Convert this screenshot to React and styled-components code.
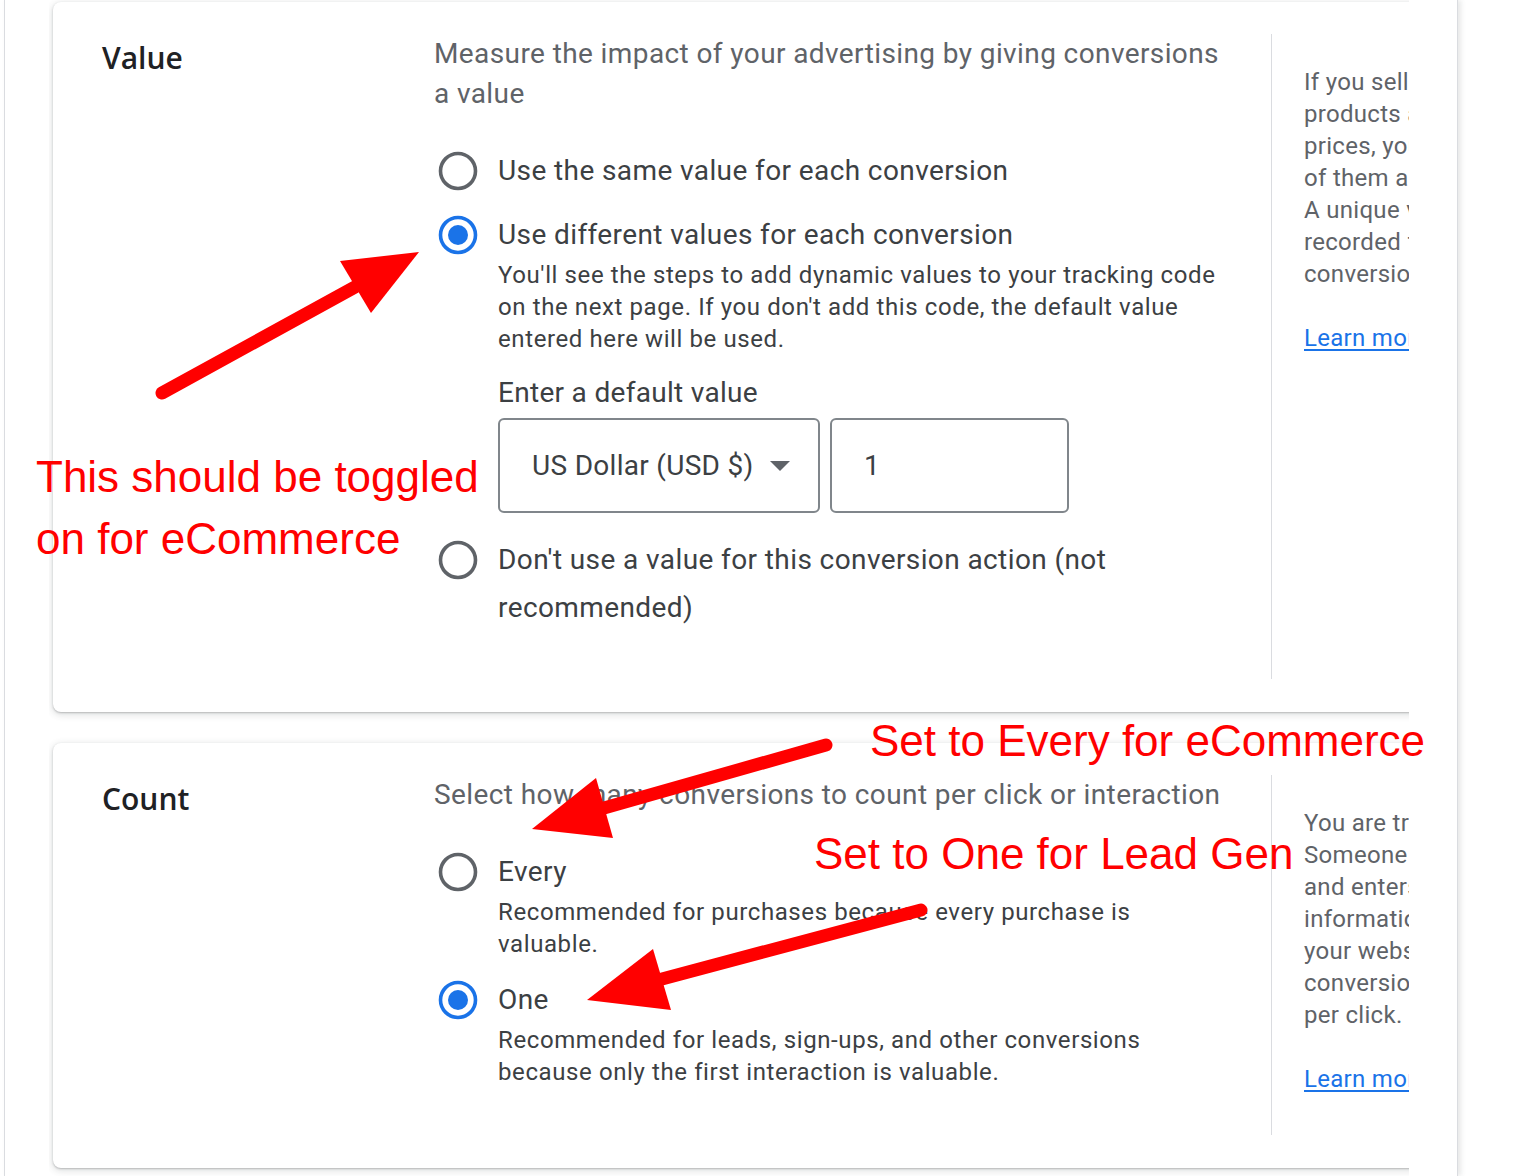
import React from 'react';
import styled, { createGlobalStyle } from 'styled-components';

const GlobalStyle = createGlobalStyle`
  html, body {
    margin: 0;
    padding: 0;
    background: #fff;
  }
  body {
    font-family: Roboto, "Liberation Sans", Arial, sans-serif;
    overflow: hidden;
  }
`;

const Page = styled.div`
  position: relative;
  width: 1534px;
  height: 1176px;
  overflow: hidden;
`;

const Frame = styled.div`
  margin-left: 4px;
  width: 1454px;
  height: 100%;
  box-sizing: border-box;
  border-left: 1px solid #dadce0;
  border-right: 1px solid #dadce0;
  box-shadow: 3px 0 5px rgba(60, 64, 67, 0.12);
  padding-left: 44px;
`;

const Clip = styled.div`
  width: 1360px;
  height: 100%;
  box-sizing: border-box;
  overflow: hidden;
  padding: 2px 0 0 4px;
  display: flex;
  flex-direction: column;
  gap: 31px;
`;

const Card = styled.section`
  flex: none;
  width: 1500px;
  box-sizing: border-box;
  display: flex;
  align-items: stretch;
  background: #fff;
  border-radius: 8px;
  box-shadow: 0 1px 2px rgba(60, 64, 67, 0.3), 0 2px 6px 2px rgba(60, 64, 67, 0.12);
  padding: 32px 0 33px 49px;
`;

const Title = styled.h2`
  flex: none;
  width: 332px;
  margin: 0;
  padding-top: 4px;
  font-family: "Open Sans", Roboto, sans-serif;
  font-weight: 600;
  font-size: 30px;
  line-height: 40px;
  color: #202124;
`;

const Main = styled.div`
  flex: none;
  width: 790px;
  padding-bottom: 47px;
`;

const Description = styled.p`
  margin: 0;
  font-size: 28px;
  line-height: 40px;
  letter-spacing: 0.4px;
  color: #5f6368;
`;

const Options = styled.div`
  margin-top: 33px;
  display: flex;
  flex-direction: column;
  gap: 16px;
`;

const Option = styled.div`
  display: grid;
  grid-template-columns: 48px 1fr;
  column-gap: 16px;
`;

const RadioBox = styled.div`
  height: 48px;
  display: flex;
  align-items: center;
  justify-content: center;
`;

const Label = styled.div`
  font-size: 28px;
  line-height: 48px;
  letter-spacing: 0.4px;
  color: #3c4043;
`;

const Helper = styled.div`
  font-size: 24px;
  line-height: 32px;
  letter-spacing: 0.6px;
  color: #3c4043;
`;

const FieldLabel = styled.div`
  margin-top: 22px;
  font-size: 28px;
  line-height: 32px;
  letter-spacing: 0.3px;
  color: #3c4043;
`;

const FieldRow = styled.div`
  margin: 9px 0 7px;
  display: flex;
  gap: 10px;
`;

const Field = styled.div`
  width: ${(p) => p.$width}px;
  height: 95px;
  box-sizing: border-box;
  border: 2px solid #80868b;
  border-radius: 6px;
  padding-left: ${(p) => p.$pad}px;
  display: flex;
  align-items: center;
  gap: 16px;
  font-size: 28px;
  letter-spacing: 0.3px;
  color: #3c4043;
`;

const Side = styled.aside`
  flex: none;
  width: 340px;
  margin-left: 47px;
  border-left: 1px solid #dadce0;
  padding: 32px 0 0 32px;
  font-size: 24px;
  line-height: 32px;
  letter-spacing: 0.3px;
  color: #5f6368;
  white-space: pre-line;
`;

const SideLink = styled.a`
  display: block;
  margin-top: 32px;
  color: #1a73e8;
  text-decoration: underline;
  text-underline-offset: 3px;
`;

const Overlay = styled.div`
  position: absolute;
  inset: 0;
  pointer-events: none;
`;

const Note = styled.div`
  position: absolute;
  left: ${(p) => p.$x}px;
  top: ${(p) => p.$y}px;
  font-family: "Liberation Sans", Arial, sans-serif;
  font-size: 44px;
  line-height: 62px;
  color: #ff0000;
  white-space: nowrap;
`;

const ArrowLayer = styled.svg`
  position: absolute;
  left: 0;
  top: 0;
`;

const Radio = ({ checked }) => (
  <svg width="40" height="40" viewBox="0 0 40 40">
    <circle
      cx="20"
      cy="20"
      r="17.5"
      fill="none"
      stroke={checked ? '#1a73e8' : '#5f6368'}
      strokeWidth="3.6"
    />
    {checked && <circle cx="20" cy="20" r="10" fill="#1a73e8" />}
  </svg>
);

const Caret = () => (
  <svg width="20" height="10" viewBox="0 0 20 10">
    <polygon points="0,0 20,0 10,10" fill="#5f6368" />
  </svg>
);

const Choice = ({ checked, label, children }) => (
  <Option>
    <RadioBox>
      <Radio checked={checked} />
    </RadioBox>
    <div>
      <Label>{label}</Label>
      {children}
    </div>
  </Option>
);

const arrows = [
  { tail: [162, 393], base: [355, 287], head: '419,252 340,261 371,313' },
  { tail: [826, 745], base: [604, 808], head: '532,829 596,778 613,838' },
  { tail: [921, 910], base: [662, 979], head: '587,1000 653,949 671,1010' },
];

export default function App() {
  return (
    <Page>
      <GlobalStyle />
      <Frame>
        <Clip>
          <Card>
            <Title>Value</Title>
            <Main>
              <Description>
                Measure the impact of your advertising by giving conversions a value
              </Description>
              <Options>
                <Choice label="Use the same value for each conversion" />
                <Choice checked label="Use different values for each conversion">
                  <Helper>
                    You'll see the steps to add dynamic values to your tracking code on the next
                    page. If you don't add this code, the default value entered here will be used.
                  </Helper>
                  <FieldLabel>Enter a default value</FieldLabel>
                  <FieldRow>
                    <Field $width={322} $pad={32}>
                      US Dollar (USD $)
                      <Caret />
                    </Field>
                    <Field $width={239} $pad={32}>
                      1
                    </Field>
                  </FieldRow>
                </Choice>
                <Choice label="Don't use a value for this conversion action (not recommended)" />
              </Options>
            </Main>
            <Side>
              {'If you sell different\nproducts at different\nprices, you can track each\nof them as a conversion.\nA unique value will be\nrecorded for each\nconversion.'}
              <SideLink href="#">Learn more</SideLink>
            </Side>
          </Card>

          <Card>
            <Title>Count</Title>
            <Main>
              <Description>
                Select how many conversions to count per click or interaction
              </Description>
              <Options>
                <Choice label="Every">
                  <Helper>
                    Recommended for purchases because every purchase is valuable.
                  </Helper>
                </Choice>
                <Choice checked label="One">
                  <Helper>
                    Recommended for leads, sign-ups, and other conversions because only the first
                    interaction is valuable.
                  </Helper>
                </Choice>
              </Options>
            </Main>
            <Side>
              {'You are tracking leads.\nSomeone clicks your ad\nand enters contact\ninformation on\nyour website. One\nconversion is counted\nper click.'}
              <SideLink href="#">Learn more</SideLink>
            </Side>
          </Card>
        </Clip>
      </Frame>

      <Overlay>
        <ArrowLayer width="1534" height="1176" viewBox="0 0 1534 1176">
          {arrows.map((a, i) => (
            <g key={i} fill="#ff0000" stroke="#ff0000">
              <line
                x1={a.tail[0]}
                y1={a.tail[1]}
                x2={a.base[0]}
                y2={a.base[1]}
                strokeWidth="13"
                strokeLinecap="round"
              />
              <polygon points={a.head} stroke="none" />
            </g>
          ))}
        </ArrowLayer>
        <Note $x={36} $y={446}>
          This should be toggled
          <br />
          on for eCommerce
        </Note>
        <Note $x={870} $y={710}>Set to Every for eCommerce</Note>
        <Note $x={814} $y={823}>Set to One for Lead Gen</Note>
      </Overlay>
    </Page>
  );
}
